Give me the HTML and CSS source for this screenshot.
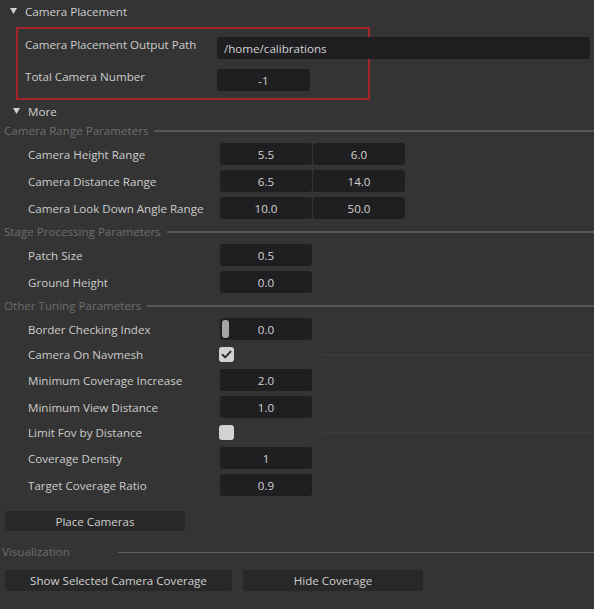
FILE: index.html
```html
<!DOCTYPE html>
<html>
<head>
<meta charset="utf-8">
<link rel="stylesheet" href="styles.css">
</head>
<body>
<div class="panel">
  <div class="collapse-head">
    <svg class="tri" width="7" height="6" viewBox="0 0 7 6"><polygon points="0,0 7,0 3.5,6" fill="#d0d0d0"/></svg>
    <span>Camera Placement</span>
  </div>

  <div class="highlight">
    <div class="row top">
      <span class="label">Camera Placement Output Path</span>
      <div class="field path">/home/calibrations</div>
    </div>
    <div class="row top">
      <span class="label">Total Camera Number</span>
      <div class="field num wide">-1</div>
    </div>
  </div>

  <div class="collapse-head more">
    <svg class="tri" width="7" height="6" viewBox="0 0 7 6"><polygon points="0,0 7,0 3.5,6" fill="#d0d0d0"/></svg>
    <span>More</span>
  </div>

  <div class="groups">
    <div class="group-head"><span>Camera Range Parameters</span><i class="rule"></i></div>
    <div class="row">
      <span class="label">Camera Height Range</span>
      <div class="pair"><div class="field num">5.5</div><div class="field num">6.0</div></div>
    </div>
    <div class="row">
      <span class="label">Camera Distance Range</span>
      <div class="pair"><div class="field num">6.5</div><div class="field num">14.0</div></div>
    </div>
    <div class="row">
      <span class="label">Camera Look Down Angle Range</span>
      <div class="pair"><div class="field num">10.0</div><div class="field num">50.0</div></div>
    </div>

    <div class="group-head"><span>Stage Processing Parameters</span><i class="rule"></i></div>
    <div class="row">
      <span class="label">Patch Size</span>
      <div class="field num">0.5</div>
    </div>
    <div class="row">
      <span class="label">Ground Height</span>
      <div class="field num">0.0</div>
    </div>

    <div class="group-head"><span>Other Tuning Parameters</span><i class="rule"></i></div>
    <div class="row">
      <span class="label">Border Checking Index</span>
      <div class="field num slider"><i class="handle"></i>0.0</div>
    </div>
    <div class="row check-row">
      <span class="label">Camera On Navmesh</span>
      <div class="checkbox checked">
        <svg width="15" height="15" viewBox="0 0 15 15"><polyline points="3.5,7.8 6.2,10.4 11.5,4.6" fill="none" stroke="#2e2e2e" stroke-width="2" stroke-linecap="round" stroke-linejoin="round"/></svg>
      </div>
      <i class="faint"></i>
    </div>
    <div class="row">
      <span class="label">Minimum Coverage Increase</span>
      <div class="field num">2.0</div>
    </div>
    <div class="row">
      <span class="label">Minimum View Distance</span>
      <div class="field num">1.0</div>
    </div>
    <div class="row check-row">
      <span class="label">Limit Fov by Distance</span>
      <div class="checkbox"></div>
      <i class="faint"></i>
    </div>
    <div class="row">
      <span class="label">Coverage Density</span>
      <div class="field num">1</div>
    </div>
    <div class="row">
      <span class="label">Target Coverage Ratio</span>
      <div class="field num">0.9</div>
    </div>
  </div>

  <div class="btn-row first">
    <div class="btn place">Place Cameras</div>
  </div>

  <div class="group-head vis"><span>Visualization</span><i class="rule"></i></div>

  <div class="btn-row last">
    <div class="btn show">Show Selected Camera Coverage</div>
    <div class="btn hide">Hide Coverage</div>
  </div>
</div>
</body>
</html>
```

FILE: styles.css
```css
html, body {
  margin: 0;
  padding: 0;
  background: #343434;
}
body {
  width: 594px;
  height: 609px;
  overflow: hidden;
  font-family: "Open Sans", "Noto Sans", "DejaVu Sans", sans-serif;
  font-size: 11.6px;
  color: #cccccc;
}
.panel {
  display: flex;
  flex-direction: column;
}
.collapse-head {
  height: 22px;
  display: flex;
  align-items: center;
  padding-left: 10px;
  gap: 8px;
  color: #cfcfcf;
}
.collapse-head .tri {
  display: block;
  margin-top: -1px;
}
.collapse-head.more {
  padding-left: 13px;
}
.highlight {
  margin-top: 5px;
  margin-left: 16px;
  width: 343px;
  border: 2px solid #a3232a;
  padding: 8px 0 7px 7px;
  display: flex;
  flex-direction: column;
  gap: 10px;
}
.row {
  display: flex;
  align-items: center;
  height: 22px;
}
.row.top {
  align-items: flex-start;
}
.row.top .label {
  line-height: 16px;
}
.label {
  width: 192px;
  flex-shrink: 0;
  color: #cccccc;
  white-space: nowrap;
}
.field {
  height: 22px;
  box-sizing: border-box;
  background: #1f1f22;
  border-radius: 3px;
  display: flex;
  align-items: center;
  flex-shrink: 0;
  color: #d2d2d2;
}
.field.path {
  width: 373px;
  padding-left: 7px;
}
.field.num {
  width: 92px;
  justify-content: center;
}
.field.num.wide {
  width: 93px;
}
.pair {
  display: flex;
  gap: 1px;
}
.groups {
  margin-top: 1px;
  display: flex;
  flex-direction: column;
  gap: 5px;
}
.groups .row {
  padding-left: 28px;
}
.group-head {
  height: 15px;
  display: flex;
  align-items: center;
  padding-left: 4px;
  color: #6e6e6e;
  gap: 6px;
  white-space: nowrap;
}
.group-head .rule {
  flex: 1;
  height: 2px;
  background: #585858;
  margin-top: 1px;
}
.group-head.vis {
  margin-top: 13px;
  padding-left: 2px;
}
.group-head.vis span {
  width: 110px;
}
.group-head.vis .rule {
  height: 1px;
  background: #606060;
}
.slider {
  position: relative;
}
.slider .handle {
  position: absolute;
  left: 2px;
  top: 2px;
  width: 7px;
  height: 18px;
  border-radius: 3px;
  background: #a6a6a6;
}
.row.check-row {
  height: 19px;
}
.checkbox {
  width: 15px;
  height: 15px;
  border-radius: 3px;
  background: #d2d2d2;
  flex-shrink: 0;
  margin-left: -1px;
}
.checkbox svg {
  display: block;
}
.faint {
  margin-left: 88px;
  flex: 1;
  height: 2px;
  background: #3a3a3a;
}
.btn-row {
  display: flex;
  gap: 11px;
  padding-left: 5px;
}
.btn-row.first {
  margin-top: 15px;
}
.btn-row.last {
  margin-top: 11px;
}
.btn {
  height: 20px;
  background: #282828;
  border-radius: 2px;
  display: flex;
  align-items: center;
  justify-content: center;
  color: #cfcfcf;
  white-space: nowrap;
}
.btn-row.last .btn {
  height: 21px;
}
.btn.place { width: 180px; }
.btn.show { width: 227px; }
.btn.hide { width: 180px; }
```
